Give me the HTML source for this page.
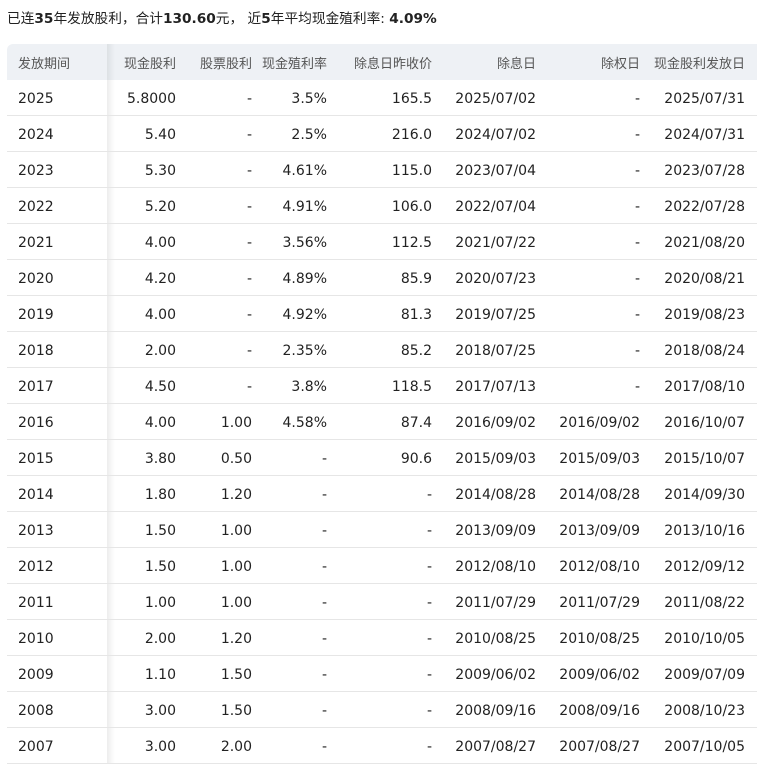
<!DOCTYPE html>
<html><head><meta charset="utf-8"><style>
body{margin:0;background:#fff;width:757px;height:754px;overflow:hidden;font-family:"DejaVu Sans","Noto Sans CJK SC",sans-serif;color:#222;}
.t{position:absolute;left:7px;top:7px;font-size:13.7px;white-space:nowrap;}
.t b{font-weight:bold;}
table{position:absolute;left:7px;top:44px;border-collapse:collapse;font-size:14px;table-layout:fixed;width:750px;}
th{height:36px;background:#eef1f5;color:#555;font-weight:normal;font-size:13px;text-align:right;padding:0 10px 0 0;}
td{height:33px;border-bottom:1px solid #e6e6e6;text-align:right;padding:2px 10px 0 0;color:#222;}
th:first-child,td:first-child{text-align:left;padding-left:11px;position:relative;}
th:first-child{border-top-left-radius:6px;}
td:first-child::after,th:first-child::after{content:"";position:absolute;right:-8px;top:0;bottom:0;width:8px;background:linear-gradient(to right,rgba(0,0,0,0.07),rgba(0,0,0,0));}
th:last-child,td:last-child{padding-right:12px;}
</style></head><body>
<div class="t">已连<b>35</b>年发放股利，合计<b>130.60</b>元， 近<b>5</b>年平均现金殖利率: <b>4.09%</b></div>
<table>
<colgroup><col style="width:100px"><col style="width:79px"><col style="width:76px"><col style="width:75px"><col style="width:105px"><col style="width:104px"><col style="width:104px"><col style="width:107px"></colgroup>
<tr><th>发放期间</th><th>现金股利</th><th>股票股利</th><th>现金殖利率</th><th>除息日昨收价</th><th>除息日</th><th>除权日</th><th>现金股利发放日</th></tr>
<tr><td>2025</td><td>5.8000</td><td>-</td><td>3.5%</td><td>165.5</td><td>2025/07/02</td><td>-</td><td>2025/07/31</td></tr>
<tr><td>2024</td><td>5.40</td><td>-</td><td>2.5%</td><td>216.0</td><td>2024/07/02</td><td>-</td><td>2024/07/31</td></tr>
<tr><td>2023</td><td>5.30</td><td>-</td><td>4.61%</td><td>115.0</td><td>2023/07/04</td><td>-</td><td>2023/07/28</td></tr>
<tr><td>2022</td><td>5.20</td><td>-</td><td>4.91%</td><td>106.0</td><td>2022/07/04</td><td>-</td><td>2022/07/28</td></tr>
<tr><td>2021</td><td>4.00</td><td>-</td><td>3.56%</td><td>112.5</td><td>2021/07/22</td><td>-</td><td>2021/08/20</td></tr>
<tr><td>2020</td><td>4.20</td><td>-</td><td>4.89%</td><td>85.9</td><td>2020/07/23</td><td>-</td><td>2020/08/21</td></tr>
<tr><td>2019</td><td>4.00</td><td>-</td><td>4.92%</td><td>81.3</td><td>2019/07/25</td><td>-</td><td>2019/08/23</td></tr>
<tr><td>2018</td><td>2.00</td><td>-</td><td>2.35%</td><td>85.2</td><td>2018/07/25</td><td>-</td><td>2018/08/24</td></tr>
<tr><td>2017</td><td>4.50</td><td>-</td><td>3.8%</td><td>118.5</td><td>2017/07/13</td><td>-</td><td>2017/08/10</td></tr>
<tr><td>2016</td><td>4.00</td><td>1.00</td><td>4.58%</td><td>87.4</td><td>2016/09/02</td><td>2016/09/02</td><td>2016/10/07</td></tr>
<tr><td>2015</td><td>3.80</td><td>0.50</td><td>-</td><td>90.6</td><td>2015/09/03</td><td>2015/09/03</td><td>2015/10/07</td></tr>
<tr><td>2014</td><td>1.80</td><td>1.20</td><td>-</td><td>-</td><td>2014/08/28</td><td>2014/08/28</td><td>2014/09/30</td></tr>
<tr><td>2013</td><td>1.50</td><td>1.00</td><td>-</td><td>-</td><td>2013/09/09</td><td>2013/09/09</td><td>2013/10/16</td></tr>
<tr><td>2012</td><td>1.50</td><td>1.00</td><td>-</td><td>-</td><td>2012/08/10</td><td>2012/08/10</td><td>2012/09/12</td></tr>
<tr><td>2011</td><td>1.00</td><td>1.00</td><td>-</td><td>-</td><td>2011/07/29</td><td>2011/07/29</td><td>2011/08/22</td></tr>
<tr><td>2010</td><td>2.00</td><td>1.20</td><td>-</td><td>-</td><td>2010/08/25</td><td>2010/08/25</td><td>2010/10/05</td></tr>
<tr><td>2009</td><td>1.10</td><td>1.50</td><td>-</td><td>-</td><td>2009/06/02</td><td>2009/06/02</td><td>2009/07/09</td></tr>
<tr><td>2008</td><td>3.00</td><td>1.50</td><td>-</td><td>-</td><td>2008/09/16</td><td>2008/09/16</td><td>2008/10/23</td></tr>
<tr><td>2007</td><td>3.00</td><td>2.00</td><td>-</td><td>-</td><td>2007/08/27</td><td>2007/08/27</td><td>2007/10/05</td></tr>
</table>
</body></html>
